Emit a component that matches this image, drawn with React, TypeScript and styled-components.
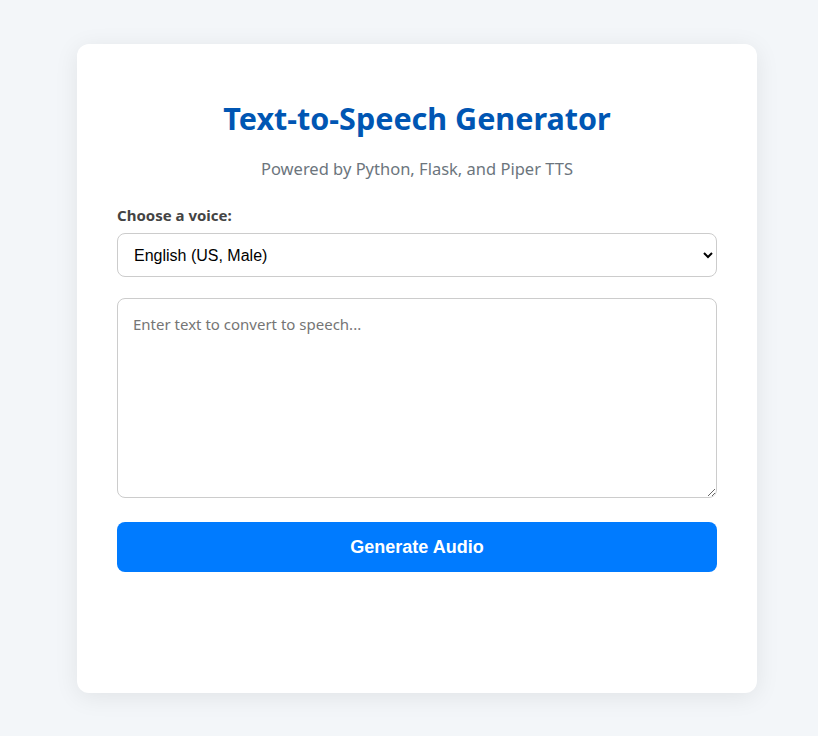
import React from 'react'
import styled, { createGlobalStyle } from 'styled-components'

const GlobalStyle = createGlobalStyle`
  body {
    margin: 0;
    background: #f3f6f9;
    font-family: 'Noto Sans', 'Open Sans', sans-serif;
  }
`

const Page = styled.div`
  display: flex;
  justify-content: center;
  padding: 44px 0 44px 16px;
`

const Card = styled.main`
  width: 680px;
  min-height: 649px;
  box-sizing: border-box;
  background: #ffffff;
  border-radius: 12px;
  box-shadow: 0 4px 24px rgba(0, 0, 0, 0.08);
  padding: 54px 40px 40px;
  display: flex;
  flex-direction: column;
`

const Title = styled.h1`
  margin: 0;
  font-size: 30.5px;
  line-height: 40px;
  font-weight: 700;
  color: #0056b3;
  text-align: center;
`

const Subtitle = styled.p`
  margin: 19px 0 0;
  font-size: 16.5px;
  line-height: 24px;
  color: #6c757d;
  text-align: center;
`

const Label = styled.label`
  display: block;
  margin-top: 24px;
  font-size: 15px;
  line-height: 20px;
  font-weight: 700;
  color: #444;
`

const Select = styled.select`
  margin-top: 8px;
  width: 100%;
  height: 44px;
  padding: 0 12px;
  border: 1px solid #ccc;
  border-radius: 8px;
  background: #fff;
  font-family: 'Liberation Sans', Arial, sans-serif;
  font-size: 16px;
  color: #000;
`

const TextArea = styled.textarea`
  margin-top: 21px;
  width: 100%;
  height: 200px;
  box-sizing: border-box;
  padding: 15px;
  border: 1px solid #ccc;
  border-radius: 8px;
  font-family: 'Noto Sans', 'Open Sans', sans-serif;
  font-size: 15px;
  resize: vertical;
  &::placeholder {
    color: #757575;
  }
`

const Button = styled.button`
  margin-top: 24px;
  width: 100%;
  height: 50px;
  border: none;
  border-radius: 8px;
  background: #007bff;
  color: #fff;
  font-family: 'Liberation Sans', Arial, sans-serif;
  font-size: 18px;
  font-weight: 700;
  cursor: pointer;
`

export default function App() {
  return (
    <Page>
      <GlobalStyle />
      <Card>
        <Title>Text-to-Speech Generator</Title>
        <Subtitle>Powered by Python, Flask, and Piper TTS</Subtitle>
        <Label htmlFor="voice">Choose a voice:</Label>
        <Select id="voice" defaultValue="en_us_male">
          <option value="en_us_male">English (US, Male)</option>
          <option value="en_us_female">English (US, Female)</option>
          <option value="en_gb">English (UK)</option>
        </Select>
        <TextArea placeholder="Enter text to convert to speech..." />
        <Button>Generate Audio</Button>
      </Card>
    </Page>
  )
}
